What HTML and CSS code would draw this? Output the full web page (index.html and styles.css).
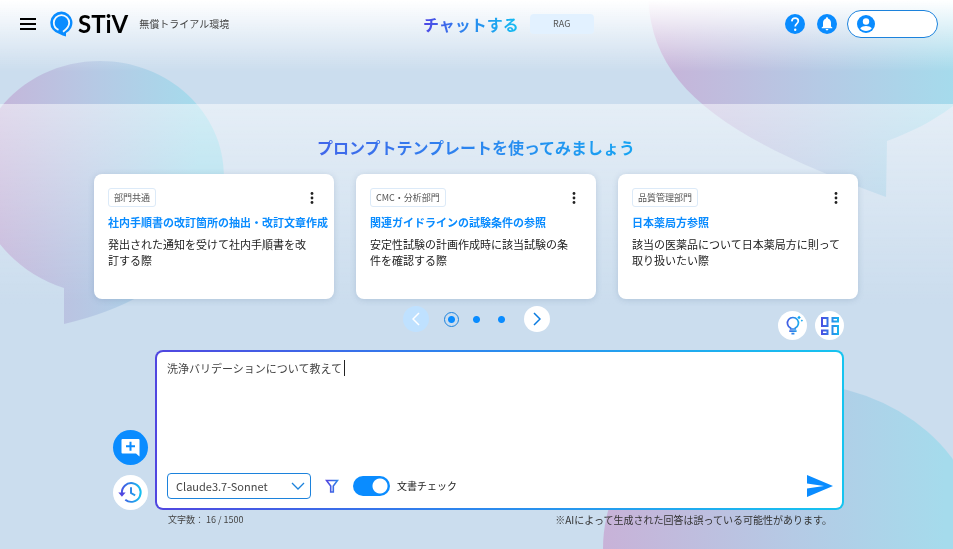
FILE: index.html
```html
<!DOCTYPE html>
<html lang="ja">
<head>
    <meta charset="UTF-8">
    <meta name="viewport" content="width=device-width, initial-scale=1.0">
    <title>STiV - チャットする</title>
    <link rel="stylesheet" href="styles.css">
</head>
<body>
    <!-- Shared gradients -->
    <svg class="defs" aria-hidden="true">
        <defs>
            <linearGradient id="bubble" x1="0" x2="1" y1="0" y2="0">
                <stop offset="0" stop-color="#c8b2d8"/>
                <stop offset="0.5" stop-color="#b5cae5"/>
                <stop offset="0.9" stop-color="#a5dbec"/>
            </linearGradient>
            <linearGradient id="accent" gradientUnits="userSpaceOnUse" x1="2" x2="22" y1="12" y2="12">
                <stop offset="0" stop-color="#5046e0"/>
                <stop offset="0.5" stop-color="#2f80e8"/>
                <stop offset="1" stop-color="#16bdf0"/>
            </linearGradient>
        </defs>
    </svg>

    <svg class="backdrop" viewBox="0 0 953 549" preserveAspectRatio="none" aria-hidden="true">
        <g fill="url(#bubble)">
            <path d="M64 288C14 272-24 228-24 178C-24 112 32 61 100 61S224 112 224 176C224 240 170 299 64 324Z"/>
            <path d="M648 -10C648 85 720 136 886 197L887 141C925 127 960 107 990 70V-10Z"/>
            <ellipse cx="793" cy="549" rx="190" ry="166"/>
        </g>
    </svg>

    <header class="header">
        <div class="brand">
            <button class="icon-button" type="button" aria-label="メニュー">
                <svg width="16" height="12" viewBox="0 0 16 12"><path d="M0 1h16M0 6h16M0 11h16" stroke="#000" stroke-width="2"/></svg>
            </button>
            <a class="logo" href="#">
                <svg width="24" height="26" viewBox="0 0 24 26">
                    <path d="M11.500 0.500A11.300 11.300 0 0 1 16 22V25.500Q12.500 24.800 9.500 22.900A11.300 11.300 0 0 1 11.500 0.500Z" fill="#0a8cff"/>
                    <path d="M8.500 18.800C5.300 17.500 3.800 15 3.800 11.800A7.700 7.700 0 1 1 19.200 11.800C19.200 15.500 17 18 13 20.800" fill="none" stroke="#f4f9fd" stroke-width="1.800"/>
                    <path d="M11.500 6A5.800 5.800 0 0 1 14 17L11.800 18.800L9.800 17.300A5.800 5.800 0 0 1 11.500 6Z" fill="#0a8cff"/>
                </svg>
                <span class="logo-text">STiV</span>
            </a>
            <span class="env">無償トライアル環境</span>
        </div>

        <nav class="modes">
            <a class="mode-current" href="#">チャットする</a>
            <button class="mode-button" type="button">RAG</button>
        </nav>

        <div class="actions">
            <button class="icon-button" type="button" aria-label="ヘルプ">
                <svg width="20" height="20" viewBox="0 0 20 20"><circle cx="10" cy="10" r="10" fill="#0a8cff"/><path d="M6.800 7.300C7 5.200 8.300 4.200 10.100 4.200C12 4.200 13.300 5.400 13.300 7.100C13.300 9.600 10.200 9.700 10.200 12.600" fill="none" stroke="#fff" stroke-width="1.700"/><circle cx="10.200" cy="15.700" r="1.200" fill="#fff"/></svg>
            </button>
            <button class="icon-button" type="button" aria-label="お知らせ">
                <svg width="20" height="20" viewBox="0 0 20 20"><circle cx="10" cy="10" r="10" fill="#0a8cff"/><path d="M10 3.300C10.800 3.300 11.200 3.900 11.200 4.700C13 5.300 14 6.800 14 8.800V12.400L15.300 13.500V14.300H4.700V13.500L6 12.400V8.800C6 6.800 7 5.300 8.800 4.700C8.800 3.900 9.200 3.300 10 3.300ZM8.600 15.100H11.400A1.400 1.400 0 0 1 8.600 15.100Z" fill="#fff"/></svg>
            </button>
            <button class="account" type="button" aria-label="アカウント">
                <svg width="18" height="18" viewBox="0 0 18 18"><circle cx="9" cy="9" r="9" fill="#0a8cff"/><circle cx="9" cy="6.500" r="3.200" fill="#fff"/><path d="M3.200 13.300C4.500 11.700 6.800 11 9 11S13.500 11.700 14.800 13.300C13.400 15 11.400 16 9 16S4.600 15 3.200 13.300Z" fill="#fff"/></svg>
            </button>
        </div>
    </header>

    <main>
        <section class="templates">
            <h1>プロンプトテンプレートを使ってみましょう</h1>
            <div class="cards">
                <article class="card">
                    <div class="card-head">
                        <span class="tag">部門共通</span>
                        <button class="icon-button more" type="button" aria-label="その他">
                            <svg width="4" height="12" viewBox="0 0 4 12" fill="#222"><circle cx="2" cy="1.500" r="1.400"/><circle cx="2" cy="6" r="1.400"/><circle cx="2" cy="10.500" r="1.400"/></svg>
                        </button>
                    </div>
                    <h2>社内手順書の改訂箇所の抽出・改訂文章作成</h2>
                    <p>発出された通知を受けて社内手順書を改<br>訂する際</p>
                </article>
                <article class="card">
                    <div class="card-head">
                        <span class="tag">CMC・分析部門</span>
                        <button class="icon-button more" type="button" aria-label="その他">
                            <svg width="4" height="12" viewBox="0 0 4 12" fill="#222"><circle cx="2" cy="1.500" r="1.400"/><circle cx="2" cy="6" r="1.400"/><circle cx="2" cy="10.500" r="1.400"/></svg>
                        </button>
                    </div>
                    <h2>関連ガイドラインの試験条件の参照</h2>
                    <p>安定性試験の計画作成時に該当試験の条<br>件を確認する際</p>
                </article>
                <article class="card">
                    <div class="card-head">
                        <span class="tag">品質管理部門</span>
                        <button class="icon-button more" type="button" aria-label="その他">
                            <svg width="4" height="12" viewBox="0 0 4 12" fill="#222"><circle cx="2" cy="1.500" r="1.400"/><circle cx="2" cy="6" r="1.400"/><circle cx="2" cy="10.500" r="1.400"/></svg>
                        </button>
                    </div>
                    <h2>日本薬局方参照</h2>
                    <p>該当の医薬品について日本薬局方に則って<br>取り扱いたい際</p>
                </article>
            </div>
        </section>

        <div class="toolbar">
            <div class="pager">
                <button class="pager-arrow" type="button" aria-label="前へ" disabled>
                    <svg width="8" height="14" viewBox="0 0 8 14"><path d="M7 1L1 7l6 6" fill="none" stroke="#fff" stroke-width="1.500"/></svg>
                </button>
                <div class="dots">
                    <button class="dot active" type="button" aria-label="1ページ"></button>
                    <button class="dot" type="button" aria-label="2ページ"></button>
                    <button class="dot" type="button" aria-label="3ページ"></button>
                </div>
                <button class="pager-arrow" type="button" aria-label="次へ">
                    <svg width="8" height="14" viewBox="0 0 8 14"><path d="M1 1l6 6l-6 6" fill="none" stroke="#0a7be0" stroke-width="1.500"/></svg>
                </button>
            </div>
            <div class="tools">
                <button class="round" type="button" aria-label="ヒント">
                    <svg width="21" height="21" viewBox="0 0 24 24" fill="none" stroke="url(#accent)">
                        <path d="M9.800 16V14.800A6.300 6.300 0 1 1 15.200 14.800V16Z" stroke-width="1.900"/>
                        <path d="M8.300 18.300h8.400M10.800 21.200h3.400" stroke-width="2"/>
                        <path d="M19.500 0.800L21.500 2.800L19.500 4.800L17.500 2.800ZM22.700 5L24 6.400L22.700 7.800L21.400 6.400Z" fill="#16a8f0" stroke="none"/>
                    </svg>
                </button>
                <button class="round" type="button" aria-label="テンプレート一覧">
                    <svg width="20" height="20" viewBox="2 2 20 20" fill="none" stroke="url(#accent)" stroke-width="2">
                        <path d="M4 4h5.500v8H4ZM14.500 4H20v3.500h-5.500ZM4 16.500h5.500V20H4ZM14.500 12H20v8h-5.500Z"/>
                    </svg>
                </button>
            </div>
        </div>

        <div class="chat">
            <div class="side">
                <button class="round large primary" type="button" aria-label="新しいチャット">
                    <svg width="19" height="19" viewBox="0 0 19 19"><path d="M1.500 1H17.500Q18.500 1 18.500 2V18.500L15 15.500H1.500Q.5 15.500 .5 14.500V2Q.5 1 1.500 1Z" fill="#fff"/><path d="M9.500 3.800v9M5 8.300h9" stroke="#0a8cff" stroke-width="2"/></svg>
                </button>
                <button class="round large" type="button" aria-label="履歴">
                    <svg width="25" height="25" viewBox="1 0 24 24" fill="none" stroke="url(#accent)" stroke-width="1.900">
                        <path d="M4.800 13A9 9 0 1 1 8 18.900M13.500 7v5.500l4 2.200"/>
                        <path d="M1.300 12h7l-3.500 4Z" fill="#5046e0" stroke="none"/>
                    </svg>
                </button>
            </div>
            <form class="composer">
                <div class="prompt">
                    <textarea aria-label="メッセージ">洗浄バリデーションについて教えて</textarea>
                    <span class="caret"></span>
                </div>
                <div class="controls">
                    <select aria-label="モデル">
                        <option>Claude3.7-Sonnet</option>
                    </select>
                    <button class="icon-button filter" type="button" aria-label="絞り込み">
                        <svg width="14" height="14" viewBox="0 0 14 14"><path d="M1.500 1.500h11L8.300 7V13H5.700V7Z" fill="none" stroke="url(#accent)" stroke-width="1.600"/></svg>
                    </button>
                    <label class="check">
                        <input type="checkbox" checked>
                        文書チェック
                    </label>
                    <button class="icon-button send" type="submit" aria-label="送信">
                        <svg width="26" height="22" viewBox="0 0 26 22"><path d="M0 0L26 11L0 22V13.500L17 11L0 8.500Z" fill="#0a8cff"/></svg>
                    </button>
                </div>
            </form>
        </div>

        <div class="notes">
            <span class="count">文字数： 16 / 1500</span>
            <span class="notice">※AIによって生成された回答は誤っている可能性があります。</span>
        </div>
    </main>
</body>
</html>
```
FILE: styles.css
```css
* {
    box-sizing: border-box;
}

body {
    margin: 0;
    min-height: 100vh;
    background: #cbddee;
    color: #222;
    font-family: "Noto Sans CJK JP", sans-serif;
    font-size: 11px;
    line-height: 16px;
    overflow-x: hidden;
}

button,
textarea,
select {
    font: inherit;
    color: inherit;
}

button {
    padding: 0;
    border: 0;
    background: none;
    cursor: pointer;
}

svg {
    display: block;
}

.defs {
    position: absolute;
    width: 0;
    height: 0;
}

.backdrop {
    position: fixed;
    inset: 0;
    z-index: -1;
    width: 100%;
    height: 100%;
}

.icon-button {
    display: flex;
    align-items: center;
    justify-content: center;
}

/* Header */
.header {
    display: grid;
    grid-template-columns: 44% 1fr auto;
    align-items: start;
    height: 104px;
    padding: 10px 15px 0 20px;
    background: linear-gradient(#fff, rgba(255, 255, 255, 0) 72px);
}

.brand,
.modes,
.actions {
    display: flex;
    align-items: center;
    height: 28px;
}

.logo {
    display: flex;
    align-items: center;
    gap: 4px;
    margin: 0 11px 0 14px;
    color: #000;
    text-decoration: none;
}

.logo-text {
    font-family: Lato, sans-serif;
    font-size: 24px;
    font-weight: 700;
    line-height: 26px;
}

.env {
    color: #444;
    font-size: 10px;
}

.modes {
    gap: 11px;
    margin-left: -1px;
}

.mode-current,
h1 {
    background: linear-gradient(90deg, #4f46e5, #2f80ed 40%, #12bdf2);
    background-clip: text;
    -webkit-background-clip: text;
    color: transparent;
    font-size: 16px;
    font-weight: 700;
    line-height: 24px;
    text-decoration: none;
}

.mode-button {
    width: 64px;
    height: 20px;
    border-radius: 4px;
    background: #e2f1ff;
    color: #555;
    font-size: 9px;
}

.actions {
    gap: 12px;
}

.account {
    display: flex;
    align-items: center;
    width: 91px;
    height: 28px;
    padding: 0 9px;
    margin-left: -2px;
    border: 1px solid #1c82dc;
    border-radius: 14px;
    background: #fff;
}

/* Template cards */
.templates {
    padding: 31px 95px 7px 94px;
    background: linear-gradient(rgba(255, 255, 255, 0.5), rgba(255, 255, 255, 0));
}

h1 {
    width: fit-content;
    margin: 0 auto 15px;
    background-image: linear-gradient(90deg, #4166ea, #2b86ef 50%, #18a4f2);
}

.cards {
    display: grid;
    grid-template-columns: repeat(3, minmax(0, 1fr));
    gap: 22px;
}

.card {
    height: 125px;
    padding: 14px;
    border-radius: 8px;
    background: #fff;
    box-shadow: 0 1px 6px rgba(60, 90, 130, 0.2);
}

.card-head {
    display: flex;
    align-items: center;
    justify-content: space-between;
    height: 19px;
}

.tag {
    padding: 0 5px;
    border: 1px solid #dceaf8;
    border-radius: 3px;
    color: #555;
    font-size: 9px;
    line-height: 17px;
}

.more {
    width: 16px;
    height: 19px;
}

h2 {
    margin: 7px 0 6px;
    color: #0a8cff;
    font-size: 11px;
    font-weight: 700;
    line-height: 16px;
    white-space: nowrap;
}

.card p {
    margin: 0;
}

/* Pager and tool buttons */
.toolbar {
    display: grid;
    grid-template-columns: 1fr auto 1fr;
    height: 34px;
    padding: 0 109px;
}

.pager {
    grid-column: 2;
    display: flex;
    align-items: center;
    align-self: start;
    gap: 15px;
}

.pager-arrow {
    display: flex;
    align-items: center;
    justify-content: center;
    width: 26px;
    height: 26px;
    border-radius: 50%;
    background: #fff;
}

.pager-arrow:disabled {
    background: #bfe1ff;
}

.dots {
    display: flex;
    gap: 10px;
}

.dot {
    width: 15px;
    height: 15px;
    border: 1px solid transparent;
    border-radius: 50%;
    background: radial-gradient(circle, #0a8cff 3px, transparent 4px);
}

.dot.active {
    border-color: #1c82dc;
}

.tools {
    display: flex;
    gap: 8px;
    align-self: end;
    justify-self: end;
}

.round {
    display: flex;
    align-items: center;
    justify-content: center;
    width: 29px;
    height: 29px;
    border-radius: 50%;
    background: #fff;
}

.round.large {
    width: 35px;
    height: 35px;
}

.round.primary {
    background: #0a8cff;
}

/* Chat input */
.chat {
    display: flex;
    align-items: flex-end;
    gap: 7px;
    margin-top: 10px;
    padding: 0 109px 0 113px;
}

.side {
    display: flex;
    flex-direction: column;
    gap: 10px;
}

.composer {
    display: flex;
    flex: 1;
    flex-direction: column;
    height: 160px;
    padding: 8px 9px 9px 10px;
    border: 2px solid transparent;
    border-radius: 8px;
    background:
        linear-gradient(#fff, #fff) padding-box,
        linear-gradient(90deg, #5046e0, #2f80ed 40%, #16c4f0) border-box;
}

.prompt {
    position: relative;
    flex: 1;
}

textarea {
    display: block;
    width: 100%;
    height: 100%;
    padding: 0;
    border: 0;
    outline: 0;
    background: none;
    color: #444;
    resize: none;
}

/* Sits after the last typed character */
.caret {
    position: absolute;
    top: 0;
    left: 16em;
    width: 1px;
    height: 16px;
    margin-left: 1px;
    background: #222;
}

.controls {
    display: flex;
    align-items: center;
    height: 26px;
}

select {
    width: 144px;
    height: 26px;
    padding: 0 8px;
    border: 1px solid #1c82dc;
    border-radius: 4px;
    appearance: none;
    background: #fff url("data:image/svg+xml,%3Csvg xmlns='http://www.w3.org/2000/svg' width='14' height='8' viewBox='0 0 14 8'%3E%3Cpath d='M1 1l6 6 6-6' fill='none' stroke='%231c82dc' stroke-width='1.300'/%3E%3C/svg%3E") no-repeat right 5px center;
    color: #444;
}

.filter {
    margin: 0 14px;
}

.check {
    display: flex;
    align-items: center;
    gap: 7px;
    font-size: 10px;
}

.check input {
    width: 37px;
    height: 20px;
    margin: 0;
    border-radius: 10px;
    appearance: none;
    background: radial-gradient(circle at 27px 10px, #fff 7px, #0a8cff 8px);
}

.send {
    margin-left: auto;
}

.notes {
    display: flex;
    justify-content: space-between;
    padding: 2px 121px 0 168px;
    color: #444;
}

.count {
    font-size: 9px;
}

.notice {
    color: #333;
    font-size: 10px;
}
```
